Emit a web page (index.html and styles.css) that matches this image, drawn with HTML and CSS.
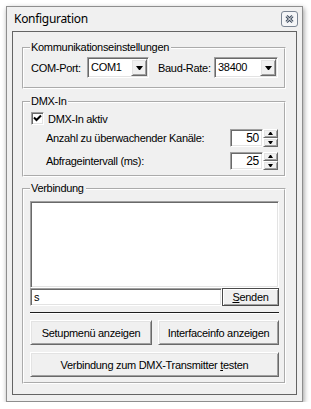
FILE: index.html
```html
<!DOCTYPE html>
<html>
<head>
<meta charset="utf-8">
<link rel="stylesheet" href="styles.css">
</head>
<body>
<div class="window">
  <div class="titlebar">
    <span class="title">Konfiguration</span>
    <svg class="close" width="17" height="16" viewBox="0 0 17 16">
      <rect x="0.5" y="0.5" width="16" height="15" rx="2.5" fill="#f5f6f8" stroke="#7c8694"/>
      <path d="M5.5 5 L11.5 11 M11.5 5 L5.5 11" stroke="#3d4b5e" stroke-width="3"/>
      <path d="M5.5 5 L11.5 11 M11.5 5 L5.5 11" stroke="#ffffff" stroke-width="1"/>
    </svg>
  </div>
  <div class="panel">
    <fieldset class="group g-comm">
      <legend>Kommunikationseinstellungen</legend>
      <div class="comm-row">
        <span class="lbl-com">COM-Port:</span>
        <div class="combo sunken c1"><span class="val">COM1</span><span class="dd raised"><svg width="7" height="4" viewBox="0 0 7 4"><polygon points="0,0 7,0 4,4 3,4" fill="#000"/></svg></span></div>
        <span class="lbl-baud">Baud-Rate:</span>
        <div class="combo sunken c2"><span class="val">38400</span><span class="dd raised"><svg width="7" height="4" viewBox="0 0 7 4"><polygon points="0,0 7,0 4,4 3,4" fill="#000"/></svg></span></div>
      </div>
    </fieldset>

    <fieldset class="group g-dmx">
      <legend>DMX-In</legend>
      <div class="check-row">
        <span class="checkbox sunken"><svg width="9" height="9" viewBox="0 0 9 9"><path d="M1 3.5 L3.5 6 L8 1.5" stroke="#000" stroke-width="2" fill="none"/></svg></span>
        <span class="check-lbl">DMX-In aktiv</span>
      </div>
      <div class="nud-row r1">
        <span class="nud-lbl">Anzahl zu überwachender Kanäle:</span>
        <div class="nud">
          <span class="nud-box sunken">50</span>
          <span class="spin">
            <span class="sb raised"><svg width="5" height="3" viewBox="0 0 5 3"><polygon points="2,0 3,0 5,3 0,3" fill="#000"/></svg></span>
            <span class="sb raised"><svg width="5" height="3" viewBox="0 0 5 3"><polygon points="0,0 5,0 3,3 2,3" fill="#000"/></svg></span>
          </span>
        </div>
      </div>
      <div class="nud-row r2">
        <span class="nud-lbl">Abfrageintervall (ms):</span>
        <div class="nud">
          <span class="nud-box sunken">25</span>
          <span class="spin">
            <span class="sb raised"><svg width="5" height="3" viewBox="0 0 5 3"><polygon points="2,0 3,0 5,3 0,3" fill="#000"/></svg></span>
            <span class="sb raised"><svg width="5" height="3" viewBox="0 0 5 3"><polygon points="0,0 5,0 3,3 2,3" fill="#000"/></svg></span>
          </span>
        </div>
      </div>
    </fieldset>

    <fieldset class="group g-verb">
      <legend>Verbindung</legend>
      <div class="listbox sunken"></div>
      <div class="send-row">
        <span class="input sunken">s</span>
        <span class="btn raised default"><span><u>S</u>enden</span></span>
      </div>
      <div class="sep"></div>
      <div class="btn-row">
        <span class="btn raised b-half"><span>Setupmenü anzeigen</span></span>
        <span class="btn raised b-half"><span>Interfaceinfo anzeigen</span></span>
      </div>
      <span class="btn raised b-full"><span>Verbindung zum DMX-Transmitter <u>t</u>esten</span></span>
    </fieldset>
  </div>
</div>
</body>
</html>
```

FILE: styles.css
```css
* { box-sizing: border-box; }

body {
  margin: 0;
  background: #ffffff;
  font-family: "Liberation Sans", Arial, sans-serif;
  font-size: 11px;
  letter-spacing: -0.3px;
  color: #000;
}

.window {
  margin: 6px 0 0 6px;
  width: 297px;
  height: 396px;
  background: #f0f0f0;
  border: 1px solid #8e8e8e;
  box-shadow: 1px 2px 5px rgba(0, 0, 0, 0.4);
  display: flex;
  flex-direction: column;
}

.titlebar {
  height: 24px;
  flex: none;
  display: flex;
  align-items: flex-start;
  justify-content: space-between;
}

.title {
  font-family: "Noto Sans", sans-serif;
  font-size: 12px;
  letter-spacing: -0.3px;
  line-height: 16px;
  margin: 4px 0 0 7px;
  color: #000;
}

.close {
  display: block;
  margin: 4px 4px 0 0;
}

.panel {
  margin: 0 5px 6px 5px;
  flex: 1;
  border: 1px solid #646464;
  display: flex;
  flex-direction: column;
}

.group {
  margin: 0 10px 0 9px;
  padding: 0 5px 0 6px;
  border: 2px groove #ffffff;
  min-width: 0;
}

.group legend {
  margin: 0;
  padding: 0 2px 0 1px;
  line-height: 13px;
}

.sunken {
  background: #fff;
  border: 1px solid;
  border-color: #a0a0a0 #fff #fff #a0a0a0;
  box-shadow: inset 1px 1px #696969, inset -1px -1px #e3e3e3;
}

.raised {
  background: #f0f0f0;
  border: 1px solid;
  border-color: #fff #696969 #696969 #fff;
  box-shadow: inset 1px 1px #e3e3e3, inset -1px -1px #a0a0a0;
}

/* Kommunikation */
.g-comm { margin-top: 9px; padding-top: 3px; padding-bottom: 9px; }

.comm-row {
  display: flex;
  align-items: center;
  height: 21px;
}

.lbl-com { width: 57px; padding-left: 1px; }
.lbl-baud { width: 65px; padding-left: 9px; }

.combo {
  height: 21px;
  display: flex;
  align-items: center;
  padding: 1px;
}
.c1 { width: 62px; }
.c2 { width: 64px; }

.combo .val { flex: 1; padding-left: 2px; line-height: 17px; }

.dd {
  width: 16px;
  height: 17px;
  display: flex;
  align-items: center;
  justify-content: center;
}
.dd svg { display: block; margin-top: 1px; }

/* DMX-In */
.g-dmx { margin-top: 6px; padding-bottom: 5px; }

.check-row {
  display: flex;
  align-items: center;
  height: 17px;
  margin-top: 2px;
  padding-left: 1px;
}

.checkbox {
  width: 13px;
  height: 13px;
  display: flex;
  align-items: center;
  justify-content: center;
}
.checkbox svg { display: block; }

.check-lbl { margin-left: 4px; }

.nud-row {
  display: flex;
  align-items: center;
  height: 18px;
  padding-left: 16px;
  padding-right: 1px;
}
.r1 { margin-top: 2px; }
.r2 { margin-top: 5px; }

.nud-lbl { flex: 1; }

.nud { display: flex; height: 18px; }

.nud-box {
  width: 33px;
  height: 18px;
  text-align: right;
  padding-right: 3px;
  font-size: 12px;
  line-height: 16px;
}

.spin {
  width: 15px;
  display: flex;
  flex-direction: column;
}

.sb {
  flex: 1;
  display: flex;
  align-items: center;
  justify-content: center;
}
.sb svg { display: block; }

/* Verbindung */
.g-verb { margin-top: 5px; padding-top: 6px; padding-bottom: 5px; }

.listbox { height: 87px; }

.send-row {
  display: flex;
  height: 18px;
}

.input {
  width: 192px;
  padding-left: 3px;
  line-height: 16px;
}

.btn {
  display: flex;
  align-items: center;
  justify-content: center;
}

.default {
  flex: 1;
  border: 1px solid #4a4a4a;
  box-shadow: inset 1px 1px #fff, inset -1px -1px #a0a0a0;
}

.sep {
  margin-top: 6px;
  height: 2px;
  border-top: 1px solid #1e1e1e;
  border-bottom: 1px solid #fff;
}

.btn-row {
  display: flex;
  justify-content: space-between;
  margin-top: 6px;
}

.b-half { width: 122px; height: 25px; }
.b-half + .b-half { width: 121px; }

.b-full { height: 25px; margin-top: 7px; }
```
